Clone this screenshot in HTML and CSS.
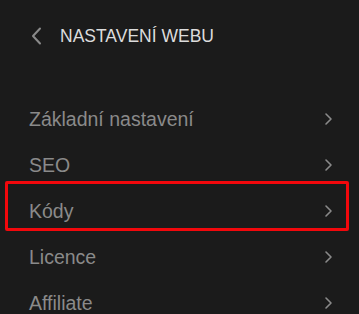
FILE: index.html
```html
<!DOCTYPE html>
<html lang="cs">
<head>
  <meta charset="UTF-8">
  <title>Nastavení webu</title>
  <link rel="stylesheet" href="styles.css">
</head>
<body>
  <div id="panel">
    <div class="header">
      <svg class="back" width="11" height="18" viewBox="0 0 11 18">
        <polyline points="9,1.5 2,9 9,16.5" fill="none" stroke="#8a8a8a" stroke-width="2" stroke-linecap="round" stroke-linejoin="round"/>
      </svg>
      <h2>NASTAVENÍ WEBU</h2>
    </div>

    <ul class="menu">
      <li class="row"><span>Základní nastavení</span><svg class="chev" width="9" height="14" viewBox="0 0 9 14"><polyline points="2,2 7,7 2,12" fill="none" stroke="#8a8a8a" stroke-width="1.6" stroke-linecap="round" stroke-linejoin="round"/></svg></li>
      <li class="row"><span>SEO</span><svg class="chev" width="9" height="14" viewBox="0 0 9 14"><polyline points="2,2 7,7 2,12" fill="none" stroke="#8a8a8a" stroke-width="1.6" stroke-linecap="round" stroke-linejoin="round"/></svg></li>
      <li class="row highlight"><span>Kódy</span><svg class="chev" width="9" height="14" viewBox="0 0 9 14"><polyline points="2,2 7,7 2,12" fill="none" stroke="#8a8a8a" stroke-width="1.6" stroke-linecap="round" stroke-linejoin="round"/></svg></li>
      <li class="row"><span>Licence</span><svg class="chev" width="9" height="14" viewBox="0 0 9 14"><polyline points="2,2 7,7 2,12" fill="none" stroke="#8a8a8a" stroke-width="1.6" stroke-linecap="round" stroke-linejoin="round"/></svg></li>
      <li class="row"><span>Affiliate</span><svg class="chev" width="9" height="14" viewBox="0 0 9 14"><polyline points="2,2 7,7 2,12" fill="none" stroke="#8a8a8a" stroke-width="1.6" stroke-linecap="round" stroke-linejoin="round"/></svg></li>
    </ul>
  </div>
</body>
</html>
```

FILE: styles.css
```css
body {
  font-family: 'Liberation Sans', Arial, sans-serif;
  background-color: #1b1b1b;
  margin: 0;
  padding: 0;
  overflow: hidden;
}

#panel {
  width: 359px;
}

.header {
  display: flex;
  align-items: center;
  height: 72px;
  padding-left: 31px;
}

.header .back {
  display: block;
  margin-right: 18px;
}

h2 {
  margin: 0;
  font-size: 17.5px;
  font-weight: normal;
  color: #dcdcdc;
  line-height: 72px;
}

.menu {
  list-style: none;
  margin: 24px 0 0 0;
  padding: 0;
}

.row {
  display: flex;
  align-items: center;
  justify-content: space-between;
  height: 46px;
  padding: 0 26px 0 29px;
  font-size: 19.5px;
  line-height: 46px;
  color: #8a8a8a;
}

.row .chev {
  display: block;
}

/* červený rámeček kolem položky */
.highlight {
  position: relative;
}
.highlight::after {
  content: '';
  position: absolute;
  left: 5px;
  right: 10px;
  top: -7px;
  bottom: 3px;
  border: 3px solid #f2080c;
  border-radius: 2px;
}
```
